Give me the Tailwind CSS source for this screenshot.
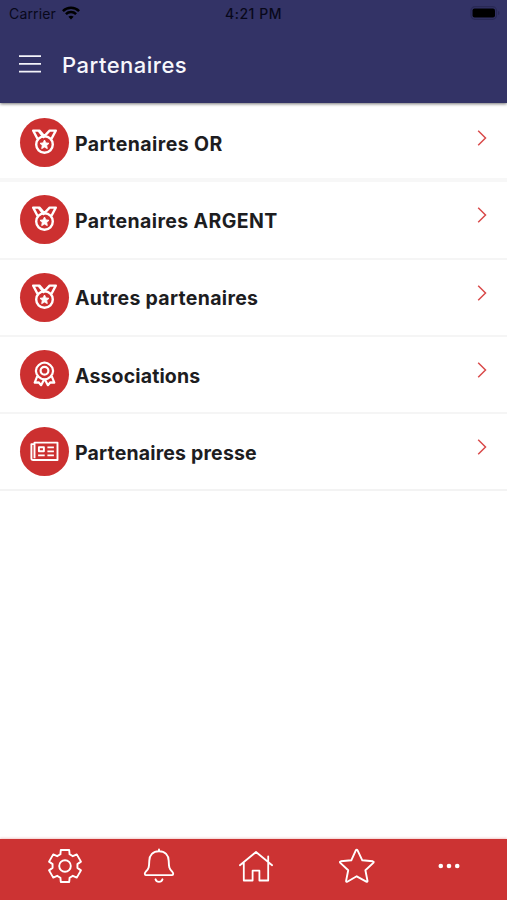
<!DOCTYPE html>
<html lang="fr">
<head>
<meta charset="utf-8">
<title>Partenaires</title>
<script src="https://cdn.jsdelivr.net/npm/@tailwindcss/browser@4"></script>
</head>
<body class="bg-white">
<svg class="hidden">
  <symbol id="medal" viewBox="0 0 49 49" fill="none" stroke="#fff" stroke-width="2.4" stroke-linejoin="round">
    <circle cx="24.5" cy="26.500" r="8.300"/>
    <path d="M17.600 21 13.200 12.600h6.200l4.500 5.200M31.400 21l4.400-8.400h-6.200l-6.800 7.200M18.900 13l4.600 5.800"/>
    <path d="m24.500 22 1.400 2.900 3.100.4-2.300 2.200.6 3.100-2.800-1.500-2.800 1.500.6-3.100-2.300-2.200 3.100-.4z" fill="#fff" stroke-width=".9"/>
  </symbol>
  <symbol id="rosette" viewBox="0 0 49 49" fill="none" stroke="#fff" stroke-width="2.200" stroke-linejoin="round">
    <path d="m24.500 12.500 3.200.8 2.600 1.800 2 2.500.8 3.300-.8 3.300-2 2.600-2.600 1.900-3.200.8-3.200-.8-2.600-1.900-2-2.600-.8-3.300.8-3.300 2-2.500 2.600-1.800z"/>
    <circle cx="24.500" cy="20.800" r="3.900"/>
    <path d="m17.300 26.200-2.600 6.500 3.900-.4 2.500 2.900 3.400-6.400M31.700 26.200l2.600 6.500-3.900-.4-2.500 2.900-3.400-6.400"/>
  </symbol>
  <symbol id="news" viewBox="0 0 49 49" fill="none" stroke="#fff" stroke-width="1.900" stroke-linejoin="round">
    <path d="M14.500 15.600h23v17.400H13.200c-1.300 0-1.800-.8-1.800-1.800V17.100h3.100zM14.500 17v14.200"/>
    <path d="M18.900 20.200h5v4h-5zM18.100 28.400h6.600M27.400 20.400h6.500M27.400 24.400h6.500M27.400 28.400h6.500"/>
  </symbol>
  <symbol id="chevron" viewBox="0 0 10 16" fill="none" stroke="#d94a4a" stroke-width="1.500"><path d="m1.200.8 7.300 7.200-7.300 7.200"/></symbol>
</svg>
<div class="flex h-[900px] w-[507px] flex-col overflow-hidden bg-white font-['Inter','Liberation_Sans',sans-serif]">
  <header class="relative h-[103px] shrink-0 bg-[#333366] shadow-[0_1px_3px_rgba(0,0,0,.55)]">
    <div class="grid h-[27px] grid-cols-3 items-center pl-[9px] pr-[7px] text-[14px] text-[#08081a]">
      <div class="flex items-center gap-[6px]">
        <span class="tracking-[.15px]">Carrier</span>
        <svg class="-mt-[1px] h-[14px] w-[18px]" viewBox="0 0 18 14" fill="none" stroke="#000" stroke-width="2.500"><path d="M.9 5.200C5.400.7 12.600.7 17.100 5.200M3.900 8.200c2.800-2.800 7.400-2.800 10.200 0"/><path d="M9 13.500 6.400 10.800c1.400-1.300 3.800-1.300 5.200 0z" fill="#000" stroke="none"/></svg>
      </div>
      <span class="-ml-[2px] text-center font-medium tracking-[.5px]">4:21 PM</span>
      <svg class="-mt-[1px] h-[14px] w-[30px] justify-self-end" viewBox="0 0 30 14"><rect x="1" y=".7" width="25.500" height="12.600" rx="4" fill="none" stroke="#292955" stroke-width="1.200"/><rect x="2.500" y="2.600" width="22.500" height="8.800" rx="2" fill="#000"/><path d="M28 5v4q1.500-.6 1.500-2T28 5" fill="#292955"/></svg>
    </div>
    <div class="flex h-[75px] items-center pl-[19px]">
      <svg class="mb-[2px] h-[20px] w-[22px]" viewBox="0 0 22 20" stroke="#f4f4fa" stroke-width="1.700"><path d="M0 2.200h22M0 9.900h22M0 17.600h22"/></svg>
      <h1 class="ml-[21px] text-[22px] font-medium leading-none tracking-[.5px] text-[#f7f7fc]">Partenaires</h1>
    </div>
  </header>
  <main class="flex-1 pt-[2px] text-[19.500px] font-bold text-[#1d1d1f]">
    <a class="flex h-[77.300px] items-center border-b-4 border-[#f7f7f7] pl-5 pr-5">
      <span class="mt-px h-[49px] w-[49px] rounded-full bg-[#cc3030]"><svg class="h-[49px] w-[49px]"><use href="#medal"/></svg></span>
      <span class="ml-[6px] mt-[5px] flex-1 tracking-[.430px]">Partenaires OR</span>
      <svg class="mb-[7px] h-4 w-[10px]"><use href="#chevron"/></svg>
    </a>
    <a class="flex h-[77.300px] items-center border-b-2 border-[#f5f5f5] pl-5 pr-5">
      <span class="h-[49px] w-[49px] rounded-full bg-[#cc3030]"><svg class="h-[49px] w-[49px]"><use href="#medal"/></svg></span>
      <span class="ml-[6px] mt-1 flex-1 tracking-[.380px]">Partenaires ARGENT</span>
      <svg class="mb-[9px] h-4 w-[10px]"><use href="#chevron"/></svg>
    </a>
    <a class="flex h-[77.300px] items-center border-b-2 border-[#f5f5f5] pl-5 pr-5">
      <span class="h-[49px] w-[49px] rounded-full bg-[#cc3030]"><svg class="h-[49px] w-[49px]"><use href="#medal"/></svg></span>
      <span class="ml-[6px] mt-[3px] flex-1 tracking-[.300px]">Autres partenaires</span>
      <svg class="mb-[9px] h-4 w-[10px]"><use href="#chevron"/></svg>
    </a>
    <a class="flex h-[77.300px] items-center border-b-2 border-[#f5f5f5] pl-5 pr-5">
      <span class="h-[49px] w-[49px] rounded-full bg-[#cc3030]"><svg class="h-[49px] w-[49px]"><use href="#rosette"/></svg></span>
      <span class="ml-[6px] mt-1 flex-1 tracking-[.130px]">Associations</span>
      <svg class="mb-[9px] h-4 w-[10px]"><use href="#chevron"/></svg>
    </a>
    <a class="flex h-[77.300px] items-center border-b-2 border-[#f3f3f3] pl-5 pr-5">
      <span class="h-[49px] w-[49px] rounded-full bg-[#cc3030]"><svg class="h-[49px] w-[49px]"><use href="#news"/></svg></span>
      <span class="ml-[6px] mt-1 flex-1 tracking-[.170px]">Partenaires presse</span>
      <svg class="mb-[9px] h-4 w-[10px]"><use href="#chevron"/></svg>
    </a>
  </main>
  <nav class="flex h-[61px] shrink-0 bg-[#cc3333] pl-[47px] pt-[9px] shadow-[0_-1px_2px_rgba(204,51,51,.25)]">
    <svg class="h-9 w-9" viewBox="0 0 36 36" fill="none" stroke="#fff" stroke-width="1.900" stroke-linejoin="round"><circle cx="18" cy="18" r="5.800"/><path d="M13.400 6.300 13.800 2h8.400l.4 4.300 3.230 1.870 3.930-1.810 4.200 7.280-3.530 2.490v3.740l3.530 2.490-4.200 7.280-3.930-1.810-3.230 1.870-.4 4.300h-8.400l-.4-4.300-3.230-1.870-3.930 1.810-4.200-7.280 3.530-2.490v-3.740l-3.530-2.490 4.200-7.280 3.930 1.810z"/></svg>
    <svg class="ml-[60px] h-9 w-8" viewBox="0 0 32 36" fill="none" stroke="#fff" stroke-width="1.900" stroke-linejoin="round" stroke-linecap="round"><path d="M16 1.500V3M16 3.300c-6.200 0-9.500 4-9.700 9.500-.2 5.800-.3 8.500-3.800 11.300-1 .9-1 3 .4 3h26.200c1.400 0 1.400-2.100.4-3-3.500-2.800-3.600-5.500-3.800-11.300-.2-5.500-3.500-9.500-9.700-9.500zM12.500 31.300c1 3.400 6 3.400 7 0"/></svg>
    <svg class="ml-[63px] h-9 w-9" viewBox="0 0 36 36" fill="none" stroke="#fff" stroke-width="1.800" stroke-linejoin="round" stroke-linecap="round"><path d="M1.900 17.300 18 4l16.100 13.300M5.800 14.500v18h8.800V22.700h6.800v9.800h8.800v-18M30.200 14V8.300"/></svg>
    <svg class="ml-[64px] h-9 w-[38px]" viewBox="0 0 38 36" fill="none" stroke="#fff" stroke-width="1.900" stroke-linejoin="round"><path d="M17.700 2.600q1-1.600 2 0l4.600 9.700 10.500 1q1.500.4.500 1.600l-7.900 7.300 2.100 10.700q0 1.300-1.200.8L18.700 28.300l-9.400 5.400q-1.200.5-1.200-.8l2.100-10.700-7.900-7.300q-1-1.200.5-1.600l10.500-1z"/></svg>
    <svg class="ml-[55px] h-9 w-9" viewBox="0 0 36 36" fill="#fff"><circle cx="9.800" cy="18" r="2.300"/><circle cx="18" cy="18" r="2.300"/><circle cx="26.200" cy="18" r="2.300"/></svg>
  </nav>
</div>
</body>
</html>
